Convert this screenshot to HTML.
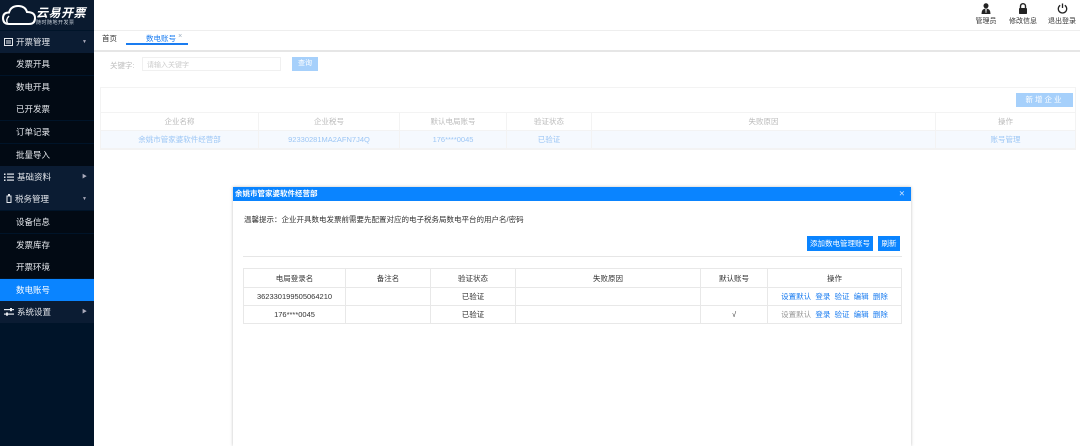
<!DOCTYPE html><html><head><meta charset="utf-8"><style>
*{margin:0;padding:0;box-sizing:border-box}
body{width:1080px;height:446px;overflow:hidden;background:#fff;font-family:"Liberation Sans","Noto Sans CJK SC",sans-serif;font-size:8px;color:#333;position:relative}
.abs{position:absolute}
.sb{left:0;top:0;width:94px;height:446px;background:#001429}
.mi{position:absolute;left:0;width:94px;height:22px;line-height:22px;color:#e6e9ee;font-size:8.5px}
.top{background:#0b1c33;padding-left:16px}
.sub{background:#020a14;padding-left:16px}
.act{background:#0a84ff;color:#fff}
.arr{position:absolute;right:7px;top:0;font-size:5px;color:#aab}
.ic{display:inline-block;vertical-align:-1px;margin-right:3px}
table{border-collapse:collapse;table-layout:fixed}
td{text-align:center;border:1px solid #e8e8e8;height:18px;font-size:7.5px}
.fade td{color:#bbb;border-color:#f3f3f3}
.tr{position:absolute;top:3px;text-align:center;font-size:7px;color:#333}
</style></head><body>
<div class="abs sb">
 <div class="abs" style="left:0;top:0;width:94px;height:30px;background:#0a1a2f"></div>
 <svg class="abs" style="left:2px;top:4px" width="34" height="22" viewBox="0 0 34 22"><path d="M7 20 Q1 20 1 14 Q1 8.5 7 8.5 Q9 1.5 17 2 Q23.5 2.5 25 8 Q33 8 33 14 Q33 20 27 20 Z" fill="none" stroke="#fff" stroke-width="2"/><path d="M6 20 Q3 16 7 12" fill="none" stroke="#fff" stroke-width="1.4"/></svg>
 <div class="abs" style="left:36px;top:4px;color:#fff;font-size:12px;font-weight:bold;font-style:italic;letter-spacing:0.5px">云易开票</div>
 <div class="abs" style="left:36px;top:19px;color:#cfd6df;font-size:5px;letter-spacing:0.5px">随时随地开发票</div>
 <div class="mi top" style="top:31px;padding-left:4px"><svg class="ic" width="9" height="8"><rect x="0.5" y="0.5" width="8" height="7" fill="none" stroke="#e6e9ee"/><line x1="2" y1="3" x2="7" y2="3" stroke="#e6e9ee"/><line x1="2" y1="5" x2="7" y2="5" stroke="#e6e9ee"/></svg>开票管理<span class="arr">▼</span></div>
 <div class="mi sub" style="top:53px">发票开具</div>
 <div class="mi sub" style="top:76px">数电开具</div>
 <div class="mi sub" style="top:98px">已开发票</div>
 <div class="mi sub" style="top:121px">订单记录</div>
 <div class="mi sub" style="top:144px">批量导入</div>
 <div class="mi top" style="top:166px;padding-left:4px"><svg class="ic" width="10" height="8"><g fill="#e6e9ee"><rect x="0" y="0.5" width="1.5" height="1.5"/><rect x="0" y="3.5" width="1.5" height="1.5"/><rect x="0" y="6.5" width="1.5" height="1.5"/><rect x="3" y="0.5" width="7" height="1.2"/><rect x="3" y="3.5" width="7" height="1.2"/><rect x="3" y="6.5" width="7" height="1.2"/></g></svg>基础资料<span class="arr">▶</span></div>
 <div class="mi top" style="top:188px;padding-left:6px"><svg class="ic" width="6" height="9"><rect x="1" y="2" width="4" height="6.5" fill="none" stroke="#e6e9ee"/><rect x="2" y="0" width="2" height="2" fill="#e6e9ee"/></svg>税务管理<span class="arr">▼</span></div>
 <div class="mi sub" style="top:211px">设备信息</div>
 <div class="mi sub" style="top:234px">发票库存</div>
 <div class="mi sub" style="top:256px">开票环境</div>
 <div class="mi sub act" style="top:279px">数电账号</div>
 <div class="mi top" style="top:301px;padding-left:4px"><svg class="ic" width="10" height="8"><g fill="#e6e9ee"><rect x="0" y="1" width="10" height="1.2"/><rect x="0" y="5.5" width="10" height="1.2"/><rect x="6" y="0" width="2" height="3.2"/><rect x="2" y="4.5" width="2" height="3.2"/></g></svg>系统设置<span class="arr">▶</span></div>
</div>
<!-- top right -->
<div class="tr" style="left:973px;width:26px"><svg width="10" height="11" viewBox="0 0 10 11" style="display:block;margin:0 auto 2px"><circle cx="5" cy="2.8" r="2.5" fill="#222"/><path d="M0.5 11 Q0.5 5.5 5 5.5 Q9.5 5.5 9.5 11Z" fill="#222"/><path d="M4.3 6 L5.7 6 L5.3 10 L4.7 10Z" fill="#fff"/></svg>管理员</div>
<div class="tr" style="left:1007px;width:32px"><svg width="10" height="11" viewBox="0 0 10 11" style="display:block;margin:0 auto 2px"><path d="M2.5 5 V3.2 A2.5 2.5 0 0 1 7.5 3.2 V5" fill="none" stroke="#222" stroke-width="1.4"/><rect x="1" y="5" width="8" height="6" rx="0.8" fill="#222"/></svg>修改信息</div>
<div class="tr" style="left:1046px;width:32px"><svg width="11" height="11" viewBox="0 0 11 11" style="display:block;margin:0 auto 2px"><path d="M3.2 2.3 A4.2 4.2 0 1 0 7.8 2.3" fill="none" stroke="#222" stroke-width="1.3"/><line x1="5.5" y1="0.5" x2="5.5" y2="5" stroke="#222" stroke-width="1.3"/></svg>退出登录</div>
<div class="abs" style="left:94px;top:30px;width:986px;height:1px;background:#eee"></div>
<div class="abs" style="left:102px;top:33px;font-size:7.5px">首页</div>
<div class="abs" style="left:146px;top:33px;font-size:7.5px;color:#1a7cf0">数电账号 <span style="color:#9ab;font-size:7px;vertical-align:top">×</span></div>
<div class="abs" style="left:126px;top:43px;width:62px;height:1.5px;background:#1a7cf0"></div>
<div class="abs" style="left:94px;top:50px;width:986px;height:2px;background:#e6e6e6"></div>
<div class="abs" style="left:110px;top:60px;color:#bbb;font-size:7.5px">关键字:</div>
<div class="abs" style="left:142px;top:57px;width:139px;height:14px;border:1px solid #f0f0f0;color:#ccc;font-size:7px;padding:2px 4px">请输入关键字</div>
<div class="abs" style="left:292px;top:57px;width:26px;height:14px;background:#a6d0fb;color:#fff;font-size:7px;text-align:center;line-height:14px">查询</div>
<div class="abs" style="left:100px;top:87px;width:976px;height:63px;border:1px solid #f3f3f3"></div>
<div class="abs" style="left:1016px;top:93px;width:57px;height:14px;background:#a6d0fb;color:#fff;font-size:7.5px;text-align:center;line-height:14px;letter-spacing:2px">新增企业</div>
<table class="abs fade" style="left:100px;top:112px;width:976px">
<col style="width:158px"><col style="width:141px"><col style="width:107px"><col style="width:85px"><col style="width:344px"><col>
<tr><td>企业名称</td><td>企业税号</td><td>默认电局账号</td><td>验证状态</td><td>失败原因</td><td>操作</td></tr>
<tr style="background:#f5f9fe"><td style="color:#9cc6f5">余姚市管家婆软件经营部</td><td style="color:#9cc6f5">92330281MA2AFN7J4Q</td><td style="color:#9cc6f5">176****0045</td><td style="color:#9cc6f5">已验证</td><td></td><td style="color:#9cc6f5">账号管理</td></tr></table>
<!-- modal -->
<div class="abs" style="left:233px;top:187px;width:678px;height:259px;background:#fff;box-shadow:0 0 3px rgba(0,0,0,.25)">
 <div style="height:14px;background:#0a84ff;color:#fff;font-size:7.5px;font-weight:bold;line-height:14px;padding-left:2px">余姚市管家婆软件经营部<span style="position:absolute;right:6px;font-weight:normal;color:#cfe4ff">✕</span></div>
 <div class="abs" style="left:11px;top:27px;font-size:7.5px">温馨提示：企业开具数电发票前需要先配置对应的电子税务局数电平台的用户名/密码</div>
 <div class="abs" style="left:574px;top:49px;width:66px;height:15px;background:#0a84ff;color:#fff;font-size:7.5px;text-align:center;line-height:15px">添加数电管理账号</div>
 <div class="abs" style="left:645px;top:49px;width:22px;height:15px;background:#0a84ff;color:#fff;font-size:7.5px;text-align:center;line-height:15px">刷新</div>
 <div class="abs" style="left:10px;top:69px;width:659px;height:1px;background:#e6e6e6"></div>
 <table class="abs" style="left:10px;top:81px;width:659px">
 <col style="width:102px"><col style="width:85px"><col style="width:85px"><col style="width:185px"><col style="width:67px"><col>
 <tr style="height:19px"><td>电局登录名</td><td>备注名</td><td>验证状态</td><td>失败原因</td><td>默认账号</td><td>操作</td></tr>
 <tr><td>362330199505064210</td><td></td><td>已验证</td><td></td><td></td><td style="color:#1a7cf0">设置默认&nbsp; 登录&nbsp; 验证&nbsp; 编辑&nbsp; 删除</td></tr>
 <tr><td>176****0045</td><td></td><td>已验证</td><td></td><td>√</td><td style="color:#1a7cf0"><span style="color:#999">设置默认</span>&nbsp; 登录&nbsp; 验证&nbsp; 编辑&nbsp; 删除</td></tr>
 </table>
</div>
</body></html>
